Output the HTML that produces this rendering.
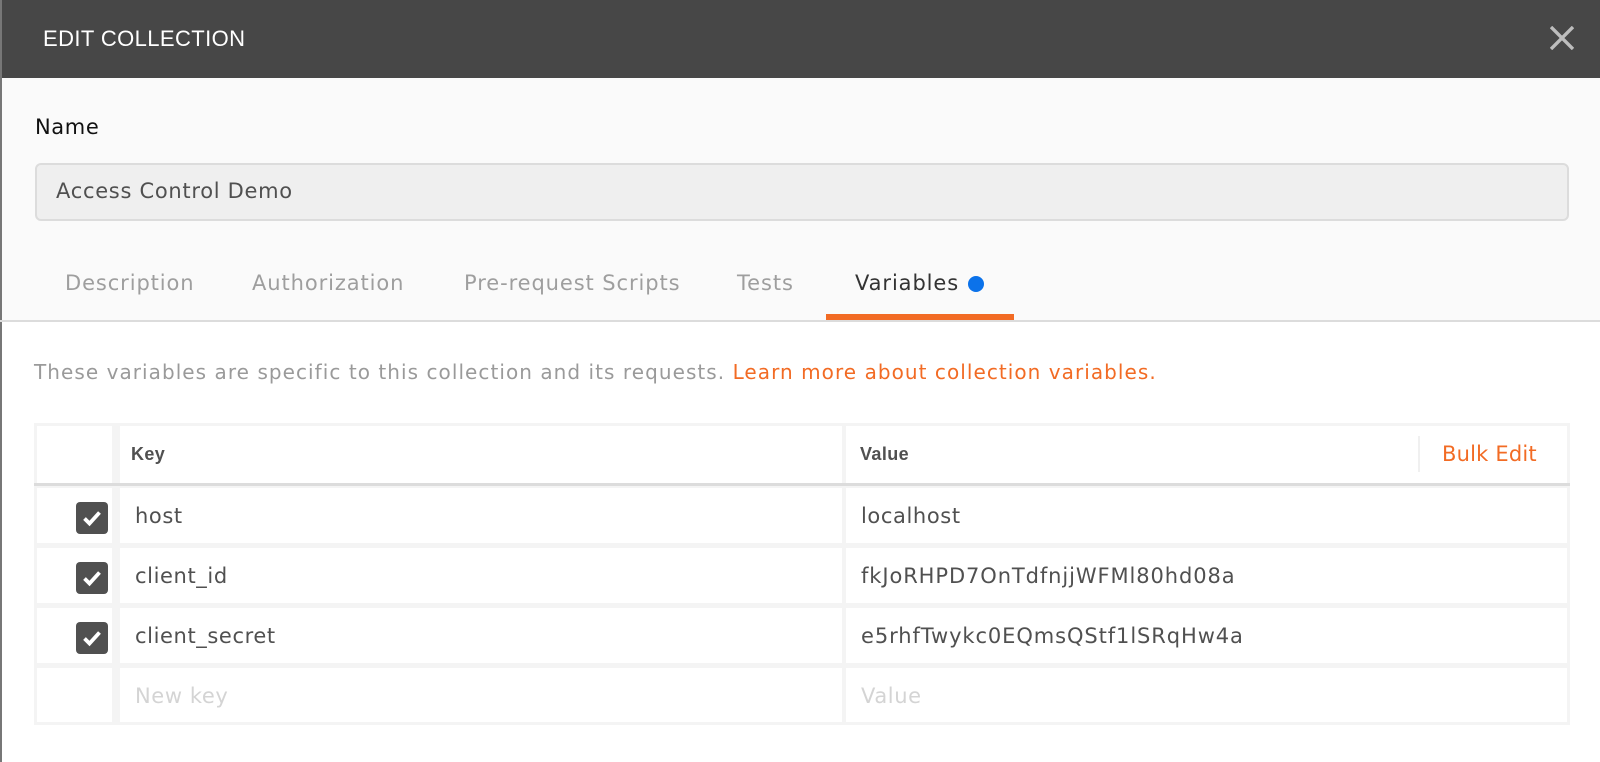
<!DOCTYPE html>
<html><head><meta charset="utf-8"><style>
*{margin:0;padding:0;box-sizing:border-box}
body{width:1600px;height:762px;overflow:hidden;background:#fff;font-family:"DejaVu Sans",sans-serif;position:relative}
.a{position:absolute;white-space:nowrap}
.cell{position:absolute;background:#fff}
.cb{position:absolute;left:76px;width:32px;height:32px;background:#505050;border-radius:4px}
.t{position:absolute;font-size:21px;color:#505050;line-height:24px;white-space:nowrap;letter-spacing:0.6px}
.tab{font-size:21px;letter-spacing:0.9px;color:#9e9e9e}
</style></head><body>
<div class="a" style="left:0;top:0;width:1600px;height:78px;background:#474747"></div>
<div class="a" style="left:43px;top:26px;font-size:22px;color:#fff;letter-spacing:0.4px;font-family:'Liberation Sans',sans-serif">EDIT COLLECTION</div>
<svg class="a" style="left:1550px;top:26px" width="24" height="24" viewBox="0 0 24 24"><path d="M1 1L23 23M23 1L1 23" stroke="#bdbdbd" stroke-width="3.4"/></svg>
<div class="a" style="left:0;top:78px;width:1600px;height:242px;background:#fafafa"></div>
<div class="a" style="left:0;top:0;width:2px;height:762px;background:#777"></div>
<div class="a" style="left:35px;top:115px;font-size:21px;color:#111;letter-spacing:0.6px">Name</div>
<div class="a" style="left:35px;top:163px;width:1534px;height:58px;background:#efefef;border:2px solid #dcdcdc;border-radius:6px"></div>
<div class="a" style="left:56px;top:179px;font-size:21px;color:#505050;letter-spacing:0.7px">Access Control Demo</div>
<div class="a" style="left:0;top:320px;width:1600px;height:2px;background:#dcdcdc"></div>
<div class="a tab" style="left:65px;top:271px">Description</div>
<div class="a tab" style="left:252px;top:271px">Authorization</div>
<div class="a tab" style="left:464px;top:271px">Pre-request Scripts</div>
<div class="a tab" style="left:737px;top:271px">Tests</div>
<div class="a tab" style="left:855px;top:271px;color:#333">Variables</div>
<div class="a" style="left:968px;top:276px;width:16px;height:16px;border-radius:50%;background:#0b72ea"></div>
<div class="a" style="left:826px;top:314px;width:188px;height:6px;background:#f26b24"></div>
<div class="a" style="left:34px;top:360px;font-size:20px;color:#9a9a9a;letter-spacing:1.05px">These variables are specific to this collection and its requests. <span style="color:#f26b24">Learn more about collection variables.</span></div>

<div class="a" style="left:34px;top:423px;width:1536px;height:302px;background:#f4f4f4"></div>
<div class="cell" style="left:37px;top:426px;width:75px;height:57px"></div>
<div class="cell" style="left:120px;top:426px;width:722px;height:57px"></div>
<div class="cell" style="left:846px;top:426px;width:721px;height:57px"></div>
<div class="a" style="left:34px;top:483px;width:1536px;height:3px;background:#dcdcdc"></div>
<div class="a" style="left:1418px;top:436px;width:2px;height:36px;background:#f0f0f0"></div>
<div class="a" style="left:131px;top:444px;font-size:18px;font-weight:bold;color:#505050;font-family:'Liberation Sans',sans-serif;letter-spacing:0.4px">Key</div>
<div class="a" style="left:860px;top:444px;font-size:18px;font-weight:bold;color:#505050;font-family:'Liberation Sans',sans-serif;letter-spacing:0.4px">Value</div>
<div class="a" style="left:1442px;top:442px;font-size:21px;color:#f26b24;letter-spacing:0.2px">Bulk Edit</div>
<div class="cell" style="left:37px;top:488px;width:75px;height:55px"></div><div class="cell" style="left:120px;top:488px;width:722px;height:55px"></div><div class="cell" style="left:846px;top:488px;width:721px;height:55px"></div>
<div class="cell" style="left:37px;top:548px;width:75px;height:55px"></div><div class="cell" style="left:120px;top:548px;width:722px;height:55px"></div><div class="cell" style="left:846px;top:548px;width:721px;height:55px"></div>
<div class="cell" style="left:37px;top:608px;width:75px;height:55px"></div><div class="cell" style="left:120px;top:608px;width:722px;height:55px"></div><div class="cell" style="left:846px;top:608px;width:721px;height:55px"></div>
<div class="cell" style="left:37px;top:668px;width:75px;height:54px"></div><div class="cell" style="left:120px;top:668px;width:722px;height:54px"></div><div class="cell" style="left:846px;top:668px;width:721px;height:54px"></div>

<div class="cb" style="top:502px"><svg width="32" height="32" viewBox="0 0 32 32"><path d="M8.5 16.5L13.5 21.5L23.5 10.5" stroke="#fff" stroke-width="3.8" fill="none"/></svg></div>
<div class="cb" style="top:562px"><svg width="32" height="32" viewBox="0 0 32 32"><path d="M8.5 16.5L13.5 21.5L23.5 10.5" stroke="#fff" stroke-width="3.8" fill="none"/></svg></div>
<div class="cb" style="top:622px"><svg width="32" height="32" viewBox="0 0 32 32"><path d="M8.5 16.5L13.5 21.5L23.5 10.5" stroke="#fff" stroke-width="3.8" fill="none"/></svg></div>

<div class="t" style="left:135px;top:504px">host</div>
<div class="t" style="left:861px;top:504px">localhost</div>
<div class="t" style="left:135px;top:564px">client_id</div>
<div class="t" style="left:861px;top:564px;letter-spacing:0.9px">fkJoRHPD7OnTdfnjjWFMl80hd08a</div>
<div class="t" style="left:135px;top:624px">client_secret</div>
<div class="t" style="left:861px;top:624px;letter-spacing:0.9px">e5rhfTwykc0EQmsQStf1lSRqHw4a</div>
<div class="t" style="left:135px;top:684px;color:#d4d4d4">New key</div>
<div class="t" style="left:861px;top:684px;color:#d4d4d4">Value</div>
</body></html>
